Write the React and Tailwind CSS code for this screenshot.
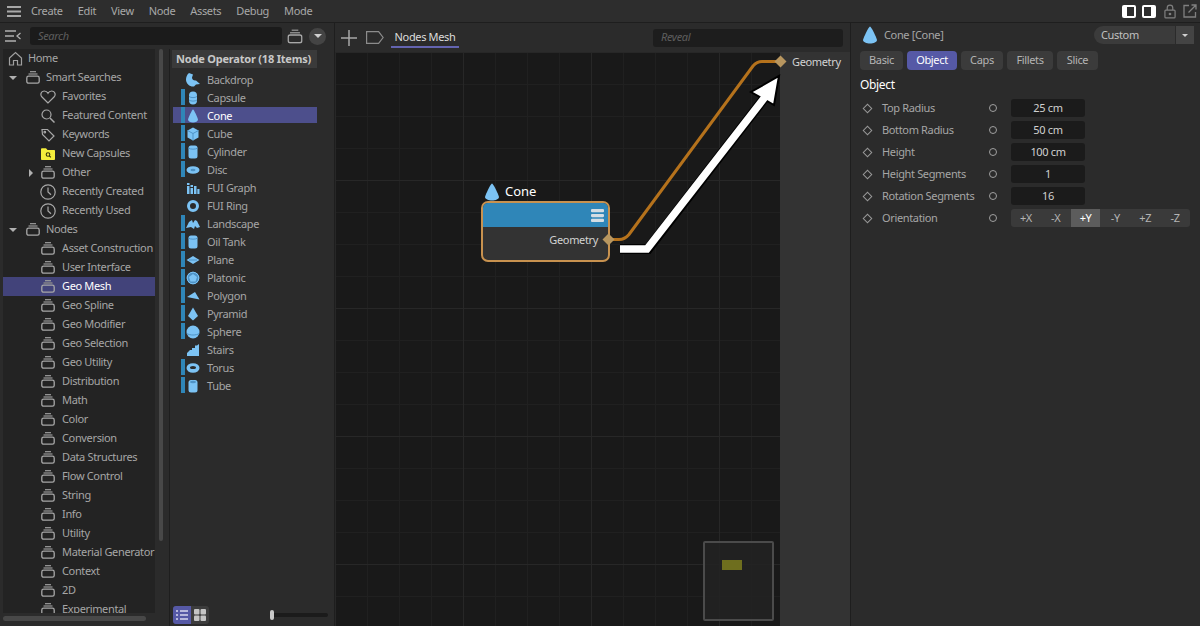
import { useState } from "react";

const menus = ["Create", "Edit", "View", "Node", "Assets", "Debug", "Mode"];

const treeItems = [
  { label: "Home", icon: "home", level: 0 },
  { label: "Smart Searches", level: 1, arrow: "down" },
  { label: "Favorites", icon: "heart", level: 2 },
  { label: "Featured Content", icon: "search", level: 2 },
  { label: "Keywords", icon: "tag", level: 2 },
  { label: "New Capsules", icon: "folder", level: 2 },
  { label: "Other", level: 2, arrow: "right" },
  { label: "Recently Created", icon: "clock", level: 2 },
  { label: "Recently Used", icon: "clock", level: 2 },
  { label: "Nodes", level: 1, arrow: "down" },
  { label: "Asset Construction", level: 2 },
  { label: "User Interface", level: 2 },
  { label: "Geo Mesh", level: 2, active: true },
  { label: "Geo Spline", level: 2 },
  { label: "Geo Modifier", level: 2 },
  { label: "Geo Selection", level: 2 },
  { label: "Geo Utility", level: 2 },
  { label: "Distribution", level: 2 },
  { label: "Math", level: 2 },
  { label: "Color", level: 2 },
  { label: "Conversion", level: 2 },
  { label: "Data Structures", level: 2 },
  { label: "Flow Control", level: 2 },
  { label: "String", level: 2 },
  { label: "Info", level: 2 },
  { label: "Utility", level: 2 },
  { label: "Material Generator", level: 2 },
  { label: "Context", level: 2 },
  { label: "2D", level: 2 },
  { label: "Experimental", level: 2 },
];

const operators = [
  { label: "Backdrop", icon: "backdrop" },
  { label: "Capsule", icon: "capsule", bar: true },
  { label: "Cone", icon: "cone", bar: true, active: true },
  { label: "Cube", icon: "cube", bar: true },
  { label: "Cylinder", icon: "cylinder", bar: true },
  { label: "Disc", icon: "disc", bar: true },
  { label: "FUI Graph", icon: "graph" },
  { label: "FUI Ring", icon: "ring" },
  { label: "Landscape", icon: "landscape", bar: true },
  { label: "Oil Tank", icon: "cylinder", bar: true },
  { label: "Plane", icon: "plane", bar: true },
  { label: "Platonic", icon: "platonic", bar: true },
  { label: "Polygon", icon: "polygon", bar: true },
  { label: "Pyramid", icon: "pyramid", bar: true },
  { label: "Sphere", icon: "sphere", bar: true },
  { label: "Stairs", icon: "stairs" },
  { label: "Torus", icon: "torus", bar: true },
  { label: "Tube", icon: "tube", bar: true },
];

const params = [
  { label: "Top Radius", value: "25 cm" },
  { label: "Bottom Radius", value: "50 cm" },
  { label: "Height", value: "100 cm" },
  { label: "Height Segments", value: "1" },
  { label: "Rotation Segments", value: "16" },
];

const tabs = [
  { label: "Basic", width: "w-[43px]" },
  { label: "Object", width: "w-[50px]", active: true },
  { label: "Caps", width: "w-[42px]" },
  { label: "Fillets", width: "w-[46px]" },
  { label: "Slice", width: "w-[41px]" },
];

function LibraryIcon({ className = "" }) {
  return (
    <svg width="14" height="13" viewBox="0 0 14 13" fill="none" className={className}>
      <path d="M4 .7h6" stroke="#a0a0a0" strokeWidth="1.2" />
      <path d="M2.5 3h9" stroke="#8a8a8a" strokeWidth="1.4" />
      <rect x=".8" y="5.2" width="12.4" height="7" rx="1.8" stroke="#a8a8a8" strokeWidth="1.3" />
    </svg>
  );
}

function TreeIcon({ name }) {
  if (name === "home")
    return (
      <svg width="15" height="15" viewBox="0 0 15 15" fill="none" stroke="#a0a0a0" strokeWidth="1.2">
        <path d="M1.5 7 7.5 1.5 13.5 7v7h-4V9.500h-4V14h-4z" />
      </svg>
    );
  if (name === "heart")
    return (
      <svg width="16" height="14" viewBox="0 0 16 14" fill="none" stroke="#a8a8a8" strokeWidth="1.2">
        <path d="M8 13 2 7C0 5 .8 1 4.2 1 6 1 7.3 2 8 3.3 8.7 2 10 1 11.8 1 15.2 1 16 5 14 7z" />
      </svg>
    );
  if (name === "search")
    return (
      <svg width="14" height="14" viewBox="0 0 14 14" fill="none" stroke="#a8a8a8" strokeWidth="1.2">
        <circle cx="5.5" cy="5.5" r="4.5" />
        <path d="m9 9 4.5 4.5" strokeWidth="1.5" />
      </svg>
    );
  if (name === "tag")
    return (
      <svg width="14" height="14" viewBox="0 0 14 14" fill="none" stroke="#a8a8a8" strokeWidth="1.2">
        <path d="M1 1.5h5.500l6.500 6.500-5 5-6.500-6.500z" />
        <circle cx="3.8" cy="4.2" r=".8" />
      </svg>
    );
  if (name === "folder")
    return (
      <svg width="14" height="12" viewBox="0 0 14 12">
        <path d="M0 1.500C0 .8.500.3 1 .3h4l1.500 1.700H13c.6 0 1 .4 1 1V11c0 .5-.4 1-1 1H1c-.6 0-1-.5-1-1z" fill="#f4ee3c" />
        <circle cx="7" cy="6.5" r="1.8" fill="none" stroke="#34340c" strokeWidth="1.1" />
        <path d="m8.300 7.800 1.500 1.500" stroke="#34340c" strokeWidth="1.2" />
      </svg>
    );
  if (name === "clock")
    return (
      <svg width="16" height="16" viewBox="0 0 16 16" fill="none" stroke="#a8a8a8" strokeWidth="1.2">
        <circle cx="8" cy="8" r="7.2" />
        <path d="M8 3.500V8l3 2.800" />
      </svg>
    );
  return <LibraryIcon />;
}

function OperatorIcon({ name }) {
  const c = "#7cc3f4";
  const d = "#4f93c6";
  const shapes = {
    backdrop: <path d="M3 0 7 1.500 6 4.500C6 6.500 8 8 10 7.500L14 11 10 11.500 8 13.500C4 14 0 11 0 6.500 0 4 1 1.500 3 0z" fill={c} />,
    capsule: (
      <>
        <rect x="3" y="0.5" width="8" height="13" rx="4" fill={c} />
        <path d="M3 5.500c2 1.500 6 1.500 8 0M3 9c2 1.500 6 1.500 8 0" stroke={d} fill="none" />
      </>
    ),
    cone: <path d="M7 .5c1 0 4.500 8 5 10 0 2-2.500 3-5 3s-5-1-5-3c.5-2 4-10 5-10z" fill={c} />,
    cube: (
      <>
        <path d="M7 .5 12.500 3.500v7L7 13.500l-5.500-3v-7z" fill={c} />
        <path d="M1.500 3.500 7 6.500l5.500-3M7 6.500v7" stroke={d} fill="none" />
      </>
    ),
    cylinder: (
      <>
        <rect x="2.5" y="0.5" width="9" height="13" rx="2.5" fill={c} />
        <path d="M2.500 3.200c2 1.300 7 1.300 9 0" stroke={d} fill="none" />
      </>
    ),
    disc: (
      <>
        <ellipse cx="7" cy="7" rx="6.5" ry="3.8" fill={c} />
        <ellipse cx="7" cy="7" rx="2.5" ry="1.2" fill={d} />
      </>
    ),
    graph: (
      <path d="M1 2h2.500v2H1zM1 5h2.500v8H1zM4.500 7H7v6H4.500zM4.500 4H7v2H4.500zM8 5h2.500v8H8zM11.300 8H13.500v5h-2.200z" fill={c} />
    ),
    ring: <circle cx="7" cy="7" r="4.5" fill="none" stroke={c} strokeWidth="3" />,
    landscape: <path d="M0 11 3 5l3-2 1 3 2-3 2 1 3 6-3 1-2-2-1 3-3-2z" fill={c} />,
    plane: (
      <>
        <path d="M7 3l6.500 4L7 11 .5 7z" fill={c} />
        <path d="M3 7h8" stroke={d} />
      </>
    ),
    platonic: (
      <>
        <circle cx="7" cy="7" r="6.3" fill={d} />
        <path d="M7 3 11 6l-1.500 4.500h-5L3 6z" fill={c} />
        <circle cx="7" cy="7" r="5.8" fill="none" stroke={c} />
      </>
    ),
    polygon: <path d="M9 3 13.500 10.500 1 8z" fill={c} />,
    pyramid: <path d="M7 .5 12 9 7 13.500 2 9z" fill={c} />,
    sphere: (
      <>
        <circle cx="7" cy="7" r="6.5" fill={c} />
        <path d="M.8 8.500c3 2 9.500 2 12.400 0" stroke={d} fill="none" />
      </>
    ),
    stairs: <path d="M13 1v12H1v-3l3-3h2V5h3V2.500h2z" fill={c} />,
    torus: (
      <>
        <ellipse cx="7" cy="7" rx="6.5" ry="4.8" fill={c} />
        <ellipse cx="7" cy="6.5" rx="3" ry="1.6" fill="#2b2b2b" />
      </>
    ),
    tube: (
      <>
        <rect x="2.5" y="1" width="9" height="12.5" rx="2.5" fill={c} />
        <ellipse cx="7" cy="3" rx="3" ry="1.2" fill={d} />
      </>
    ),
  };
  return (
    <svg width="14" height="14" viewBox="0 0 14 14">
      {shapes[name]}
    </svg>
  );
}

function ConeIcon() {
  return (
    <svg width="16" height="18" viewBox="0 0 16 18">
      <path d="M8 .5c1.200 0 6.500 11 7 13.500 0 2.300-3.500 3.500-7 3.500S1 16.300 1 14C1.500 11.500 6.800.5 8 .5z" fill="#7cc3f4" />
    </svg>
  );
}

function TreeRow({ item }) {
  return (
    <div
      className={`flex h-[19px] shrink-0 items-center ${
        item.active ? "bg-[#42437a] text-white" : "text-[#a6a6a6]"
      } ${item.level === 0 ? "pl-[2px]" : item.level === 1 ? "pl-[3px]" : "pl-[21px]"}`}
    >
      <span className="flex w-[14px] shrink-0 items-center justify-center">
        {item.arrow === "down" && <span className="h-0 w-0 border-x-[4px] border-t-[4px] border-x-transparent border-t-[#b0b0b0]" />}
        {item.arrow === "right" && <span className="h-0 w-0 border-y-[4px] border-l-[4px] border-y-transparent border-l-[#b0b0b0]" />}
      </span>
      <span
        className={`flex shrink-0 items-center justify-center ${
          item.level === 0 ? "-ml-[11px] mr-[5px] w-[15px]" : item.level === 1 ? "ml-[6px] mr-[6px] w-[14px]" : "ml-[1px] mr-[5px] w-[18px]"
        }`}
      >
        <TreeIcon name={item.icon} />
      </span>
      <span className="whitespace-nowrap">{item.label}</span>
    </div>
  );
}

function OperatorRow({ item }) {
  return (
    <div className={`relative flex h-[18px] items-center pl-[16px] ${item.active ? "text-white" : "text-[#a6a6a6]"}`}>
      {item.active && <div className="absolute bottom-[2px] left-[3px] right-0 top-0 bg-[#4d4f8c]" />}
      {item.bar && <div className="absolute bottom-[2px] left-[11px] top-0 w-[4px] bg-[#2f86b8]" />}
      <span className="relative mr-[7px] flex w-[14px] justify-center">
        <OperatorIcon name={item.icon} />
      </span>
      <span className="relative whitespace-nowrap">{item.label}</span>
    </div>
  );
}

function ParamLabel({ label }) {
  return (
    <>
      <span className="ml-[4px] h-[7px] w-[7px] rotate-45 border-[1.5px] border-[#989898]" />
      <span className="ml-[11px] w-[103px] whitespace-nowrap text-[#a6a6a6]">{label}</span>
      <span className="ml-[4px] mr-[14px] h-[8px] w-[8px] rounded-full border-[1.5px] border-[#a0a0a0]" />
    </>
  );
}

function LeftPanel() {
  return (
    <div className="flex w-[335px] shrink-0 flex-col border-r border-[#1e1e1e]">
      <div className="flex h-[26px] shrink-0 items-center">
        <svg width="16" height="12" viewBox="0 0 16 12" fill="none" stroke="#b0b0b0" strokeWidth="1.3" className="ml-[5px]">
          <path d="M0 1h11M0 6h9M0 11h11M15.500 3 12 6l3.500 3" />
        </svg>
        <div className="ml-[9px] flex h-[18px] w-[252px] items-center rounded-[3px] bg-[#1b1b1b] pl-[8px] italic text-[#5e5e5e]">Search</div>
        <LibraryIcon className="ml-[6px] scale-110" />
        <span className="ml-[7px] flex h-[17px] w-[17px] items-center justify-center rounded-full bg-[#444444]">
          <span className="h-0 w-0 border-x-[4px] border-t-[4px] border-x-transparent border-t-[#d0d0d0]" />
        </span>
      </div>
      <div className="flex min-h-0 flex-1">
        <div className="flex w-[170px] shrink-0 flex-col border-r border-[#1e1e1e]">
          <div className="flex min-h-0 flex-1">
            <div className="ml-[3px] h-[564px] w-[152px] overflow-hidden bg-[#232323]">
              {treeItems.map((item) => (
                <TreeRow key={item.label} item={item} />
              ))}
            </div>
            <div className="ml-[4px] h-[492px] w-[4px] rounded-full bg-[#484848]" />
          </div>
          <div className="mb-[5px] ml-[3px] h-[5px] w-[143px] rounded-full bg-[#484848]" />
        </div>
        <div className="flex min-w-0 flex-1 flex-col">
          <div className="ml-[2px] mt-px h-[18px] w-[145px] bg-[#3a3a3a] pl-[4px] font-bold leading-[18px] tracking-[-0.2px] text-[#c8c8c8]">Node Operator (18 Items)</div>
          <div className="mt-[3px] flex w-[147px] flex-1 flex-col">
            {operators.map((item) => (
              <OperatorRow key={item.label} item={item} />
            ))}
          </div>
          <div className="mb-[2px] flex h-[18px] items-center">
            <div className="ml-[3px] flex h-[18px] w-[36px] overflow-hidden rounded-[3px] bg-[#3c3c3c]">
              <span className="flex w-[18px] items-center justify-center bg-[#5659a6]">
                <svg width="12" height="10" viewBox="0 0 12 10" stroke="#d8d8ee" strokeWidth="1.4">
                  <path d="M0 1h2M4 1h8M0 5h2M4 5h8M0 9h2M4 9h8" />
                </svg>
              </span>
              <span className="flex w-[18px] items-center justify-center">
                <svg width="12" height="12" viewBox="0 0 12 12" fill="#c4c4c4">
                  <rect width="5.5" height="5.5" rx="1" />
                  <rect x="6.5" width="5.5" height="5.5" rx="1" />
                  <rect y="6.5" width="5.5" height="5.5" rx="1" />
                  <rect x="6.5" y="6.5" width="5.5" height="5.5" rx="1" />
                </svg>
              </span>
            </div>
            <div className="relative ml-[61px] h-[4px] w-[58px] rounded-full bg-[#1b1b1b]">
              <span className="absolute -top-[3px] left-0 h-[10px] w-[4px] rounded-[2px] bg-[#c8c8c8]" />
            </div>
          </div>
        </div>
      </div>
    </div>
  );
}

function NodeGraph() {
  return (
    <div className="relative flex min-h-0 flex-1">
      <div className="w-[445px] shrink-0 bg-[#191919] bg-[linear-gradient(#272727_1px,transparent_1px),linear-gradient(90deg,#272727_1px,transparent_1px),linear-gradient(#202020_1px,transparent_1px),linear-gradient(90deg,#202020_1px,transparent_1px)] bg-[size:128px_128px,128px_128px,32px_32px,32px_32px]" />
      <div className="flex flex-1 items-start bg-[#333333] pl-[12px] pt-[2px] text-[#d2d2d2]">Geometry</div>

      <div className="absolute left-[146px] top-[131px] flex w-[129px] flex-col">
        <div className="flex h-[18px] items-center gap-[5px] pl-[3px] text-[13px] tracking-normal text-white">
          <ConeIcon />
          Cone
        </div>
        <div className="h-[61px] overflow-hidden rounded-[7px] border-2 border-[#c8924f] bg-[#333333]">
          <div className="flex h-[24px] items-center justify-end bg-[#2f86b8] pr-[4px]">
            <svg width="13" height="13" viewBox="0 0 12 12" fill="#d4dde3">
              <rect width="12" height="3" rx="1" />
              <rect y="4.5" width="12" height="3" rx="1" />
              <rect y="9" width="12" height="3" rx="1" />
            </svg>
          </div>
          <div className="pr-[10px] pt-[5px] text-right text-[#d2d2d2]">Geometry</div>
        </div>
      </div>

      <svg width="515" height="260" viewBox="335 52 515 260" className="absolute left-0 top-0">
        <path d="M610 239.500h9c4 0 7-1.500 10-5L753 66c3-3.500 5-4.500 9-4.500h15" fill="none" stroke="#b5721c" strokeWidth="3" />
        <path d="M608.500 233.500 614.500 239.500 608.500 245.500 602.500 239.500z" fill="#b8965f" />
        <path d="M780.500 55.500 786.500 61.500 780.500 67.500 774.500 61.500z" fill="#b8965f" />
        <path d="M620 249h28L766 96" fill="none" stroke="#000" strokeWidth="10" />
        <path d="M779 76 774 105 751 92z" fill="#fff" stroke="#000" strokeWidth="2" />
        <path d="M620 249h27L765 97" fill="none" stroke="#fff" strokeWidth="7.5" />
      </svg>

      <div className="absolute left-[368px] top-[489px] h-[80px] w-[71px] rounded-[2px] border-2 border-[#4b4b4b] bg-[#232323]/80">
        <div className="absolute left-[17px] top-[17px] h-[10px] w-[20px] bg-[#6e6e1e]" />
      </div>
    </div>
  );
}

function CenterPanel() {
  return (
    <div className="flex w-[516px] shrink-0 flex-col border-r border-[#1e1e1e]">
      <div className="flex h-[29px] shrink-0 items-center pl-[6px]">
        <svg width="16" height="16" viewBox="0 0 16 16" stroke="#a8a8a8" strokeWidth="1.5">
          <path d="M8 0v16M0 8h16" />
        </svg>
        <svg width="18" height="13" viewBox="0 0 18 13" fill="none" stroke="#8c8c8c" strokeWidth="1.2" className="ml-[9px]">
          <path d="M.6.7h12l4.500 5.800-4.500 5.800H.6z" />
        </svg>
        <div className="relative ml-[7px] flex h-[29px] w-[68px] items-center justify-center text-[#dcdcdc]">
          <span className="whitespace-nowrap">Nodes Mesh</span>
          <span className="absolute bottom-[4px] left-0 right-0 h-[2px] bg-[#6464b0]" />
        </div>
        <div className="ml-[194px] flex h-[18px] w-[190px] items-center rounded-[3px] bg-[#1d1d1d] pl-[8px] italic text-[#5e5e5e]">Reveal</div>
      </div>
      <NodeGraph />
    </div>
  );
}

function RightPanel() {
  const [axis] = useState("+Y");
  return (
    <div className="flex min-w-0 flex-1 flex-col pl-[9px]">
      <div className="flex h-[24px] shrink-0 items-center">
        <span className="ml-[2px]">
          <ConeIcon />
        </span>
        <span className="ml-[6px] text-[#a6a6a6]">Cone [Cone]</span>
        <div className="ml-auto mr-[6px] flex h-[18px] w-[100px] overflow-hidden rounded-l-full rounded-r-[5px] bg-[#3b3b3b] text-[#c0c0c0]">
          <span className="flex-1 pl-[7px] leading-[18px]">Custom</span>
          <span className="flex w-[19px] items-center justify-center border-l border-[#2b2b2b] bg-[#444444]">
            <span className="h-0 w-0 border-x-[3.5px] border-t-[3.5px] border-x-transparent border-t-[#d0d0d0]" />
          </span>
        </div>
      </div>
      <div className="mt-[4px] flex gap-[4px]">
        {tabs.map((t) => (
          <div
            key={t.label}
            className={`flex h-[19px] items-center justify-center rounded-[4px] ${t.width} ${
              t.active ? "bg-[#5659a6] text-white" : "bg-[#3b3b3b] text-[#b4b4b4]"
            }`}
          >
            {t.label}
          </div>
        ))}
      </div>
      <div className="mb-[5px] mt-[6px] h-[18px] text-[12px] leading-[18px] text-white">Object</div>
      <div className="flex flex-col gap-[4px]">
        {params.map((p) => (
          <div key={p.label} className="flex h-[18px] items-center">
            <ParamLabel label={p.label} />
            <div className="flex h-[18px] w-[74px] items-center justify-center rounded-[3px] bg-[#1b1b1b] text-[#d0d0d0]">{p.value}</div>
          </div>
        ))}
        <div className="flex h-[18px] items-center">
          <ParamLabel label="Orientation" />
          <div className="flex h-[18px] w-[179px] overflow-hidden rounded-[3px] bg-[#3a3a3a]">
            {["+X", "-X", "+Y", "-Y", "+Z", "-Z"].map((a) => (
              <span
                key={a}
                className={`flex flex-1 items-center justify-center ${a === axis ? "bg-[#5c5c5c] text-white" : "text-[#b4b4b4]"}`}
              >
                {a}
              </span>
            ))}
          </div>
        </div>
      </div>
    </div>
  );
}

export default function App() {
  return (
    <div className="flex h-[626px] w-[1200px] flex-col overflow-hidden bg-[#2b2b2b] font-['Noto_Sans',sans-serif] text-[11px] tracking-[-0.35px]">
      <div className="flex h-[23px] shrink-0 items-center border-b border-[#1e1e1e] bg-[#2d2d2d] text-[#a8a8a8]">
        <svg width="14" height="11" viewBox="0 0 14 11" fill="#a8a8a8" className="ml-[7px]">
          <rect width="14" height="2" />
          <rect y="4.5" width="14" height="2" />
          <rect y="9" width="14" height="2" />
        </svg>
        <div className="ml-[10px] flex gap-[15px]">
          {menus.map((m) => (
            <span key={m}>{m}</span>
          ))}
        </div>
        <div className="ml-auto mr-[3px] flex items-center">
          <span className="flex h-[13px] w-[14px] justify-end rounded-[2px] bg-white p-[2px] pl-[5px]">
            <span className="w-full bg-[#2d2d2d]" />
          </span>
          <span className="ml-[6px] flex h-[13px] w-[14px] rounded-[2px] bg-white p-[2px] pr-[5px]">
            <span className="w-full bg-[#2d2d2d]" />
          </span>
          <svg width="12" height="15" viewBox="0 0 13 16" fill="none" stroke="#808080" strokeWidth="1.3" className="ml-[8px]">
            <rect x="1" y="6.5" width="11" height="8.5" rx="1" />
            <path d="M3.500 6.500V4a3 3 0 0 1 6 0v2.500" />
            <circle cx="6.5" cy="10.7" r=".8" />
          </svg>
          <svg width="14" height="14" viewBox="0 0 14 14" fill="none" stroke="#808080" strokeWidth="1.3" className="ml-[7px]">
            <path d="M6 1.500H1v11.500h11.500V8M5.500 8.500 13 1M8.500 1H13v4.500" />
          </svg>
        </div>
      </div>
      <div className="flex min-h-0 flex-1">
        <LeftPanel />
        <CenterPanel />
        <RightPanel />
      </div>
    </div>
  );
}
